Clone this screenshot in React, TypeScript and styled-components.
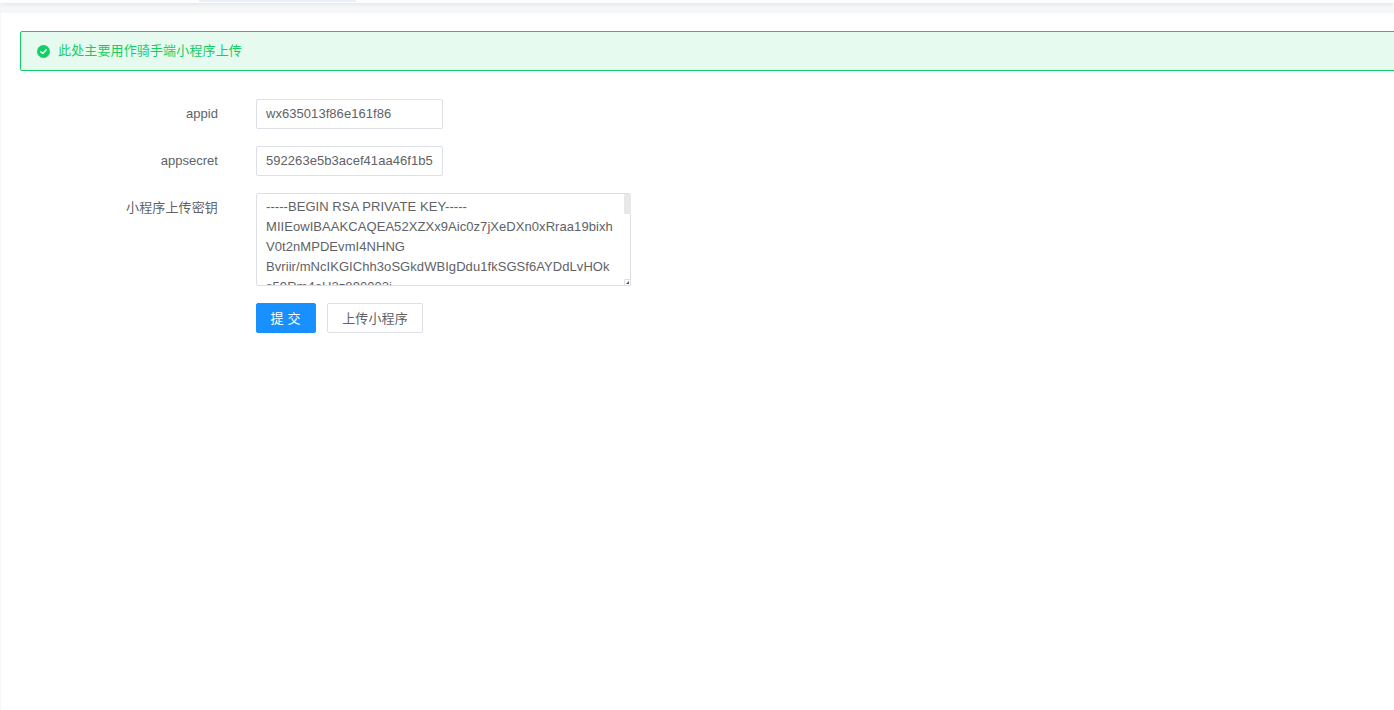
import React from "react";
import styled, { createGlobalStyle } from "styled-components";

const Global = createGlobalStyle`
  html, body { margin: 0; padding: 0; height: 100%; overflow: hidden; background: #f5f7f9; }
  #root { height: 100%; }
  * { box-sizing: border-box; }
`;
const Page = styled.div`
  height: 710px; width: 1394px; overflow: hidden; display: flex; flex-direction: column;
  font-family: "Liberation Sans", Arial, "Noto Sans CJK SC", sans-serif; font-size: 13px; color: #606266;
`;
const TopBar = styled.div`
  height: 3px; flex: none; background: #ffffff; padding-left: 199px;
  box-shadow: 0 1px 4px rgba(0, 21, 41, 0.10); position: relative;
`;
const ActiveTab = styled.div`width: 157px; height: 2px; background: #e8f1fb;`;
const Content = styled.main`
  flex: 1; margin: 10px 0 0 1px; background: #ffffff; padding: 18px 0 0 19px; min-height: 0;
`;
const Alert = styled.div`
  width: 1400px; height: 40px; border: 1px solid #13ce66; border-radius: 2px; background: #e7faf0;
  display: flex; align-items: center; gap: 8px; padding-left: 16px; color: #13ce66; margin-bottom: 28px;
`;
const AlertIcon = styled.svg`width: 13px; height: 13px; flex: none; margin-top: 1px;`;
const AlertText = styled.span`padding-bottom: 4px; letter-spacing: 0.14px;`;
const Form = styled.form`display: flex; flex-direction: column; gap: 17px;`;
const Row = styled.div`display: flex; align-items: flex-start;`;
const Label = styled.label<{ $spacing?: number }>`
  width: 198px; text-align: right; line-height: 30px; height: 30px; margin-right: 38px; color: #606266; flex: none;
  letter-spacing: ${(p) => p.$spacing ?? 0.02}px;
`;
const Input = styled.input`
  width: 187px; height: 30px; border: 1px solid #dcdfe6; border-radius: 2px; padding: 0 9px 1px; outline: none;
  font: inherit; color: #606266; background: #fff; letter-spacing: 0.05px;
`;
const AreaWrap = styled.div`position: relative; width: 375px; height: 93px;`;
const TextArea = styled.textarea`
  display: block; width: 100%; height: 100%; border: 1px solid #dcdfe6; border-radius: 2px; padding: 3px 9px;
  outline: none; font: inherit; line-height: 20px; color: #606266; background: #fff; resize: none;
  overflow-y: scroll; letter-spacing: 0.06px;
  &::-webkit-scrollbar { width: 6px; }
  &::-webkit-scrollbar-thumb { background: #e6e6e6; }
`;
const ScrollThumb = styled.div`
  position: absolute; top: 1px; right: 0; width: 7px; height: 20px; background: #e8e8e8; border-radius: 1px;
`;
const Resizer = styled.div`
  position: absolute; right: 0; bottom: 0; width: 7px; height: 7px; background: #fff;
  border: 1px solid #dcdfe6; border-radius: 0 0 2px 0;
  display: flex; align-items: center; justify-content: center;
`;
const ResizerDot = styled.div`width: 3px; height: 3px; background: #555; clip-path: polygon(100% 0, 100% 100%, 0 100%);`;
const Actions = styled.div`display: flex; gap: 11px; padding-left: 236px;`;
const PrimaryButton = styled.button`
  width: 60px; height: 30px; border: 1px solid #1890ff; border-radius: 2px; background: #1890ff; color: #fff;
  font: inherit; padding: 0 1px 2px 0; letter-spacing: 0.2px;
`;
const DefaultButton = styled.button`
  width: 96px; height: 30px; border: 1px solid #dcdfe6; border-radius: 2px; background: #fff; color: #606266;
  font: inherit; padding: 0 0 2px; letter-spacing: 0.14px;
`;

const KEY = `-----BEGIN RSA PRIVATE KEY-----
MIIEowIBAAKCAQEA52XZXx9Aic0z7jXeDXn0xRraa19bixh
V0t2nMPDEvmI4NHNG
Bvriir/mNcIKGIChh3oSGkdWBIgDdu1fkSGSf6AYDdLvHOk
s59Rm4oH2z890003j
vT7dQk1mZp8sYc2LxN0aRtUe4WgHf6JbK3nVqMoPi9ZlCw
`;

export default function App() {
  return (
    <Page>
      <Global />
      <TopBar><ActiveTab /></TopBar>
      <Content>
        <Alert>
          <AlertIcon viewBox="0 0 14 14">
            <circle cx="7" cy="7" r="7" fill="#13ce66" />
            <path d="M4 7.2 L6.2 9.2 L10 5.2" fill="none" stroke="#fff" strokeWidth="1.5" strokeLinecap="round" strokeLinejoin="round" />
          </AlertIcon>
          <AlertText>此处主要用作骑手端小程序上传</AlertText>
        </Alert>
        <Form>
          <Row>
            <Label>appid</Label>
            <Input readOnly value="wx635013f86e161f86" />
          </Row>
          <Row>
            <Label>appsecret</Label>
            <Input readOnly value="592263e5b3acef41aa46f1b5" />
          </Row>
          <Row>
            <Label $spacing={0.14}>小程序上传密钥</Label>
            <AreaWrap>
              <TextArea readOnly value={KEY} />
              <ScrollThumb />
              <Resizer><ResizerDot /></Resizer>
            </AreaWrap>
          </Row>
          <Actions>
            <PrimaryButton type="button">提 交</PrimaryButton>
            <DefaultButton type="button">上传小程序</DefaultButton>
          </Actions>
        </Form>
      </Content>
    </Page>
  );
}
